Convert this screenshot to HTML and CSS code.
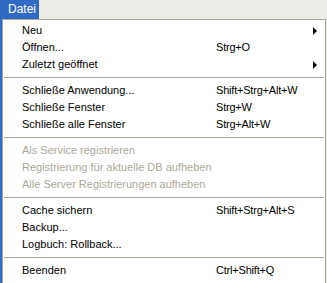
FILE: index.html
```html
<!DOCTYPE html>
<html>
  <head>
    <meta name="viewport" content="width=device-width, initial-scale=1">
    <link rel="stylesheet" href="styles.css">
  </head>
  <body>
    <div class="menubar">
      <span class="menutitle">Datei</span>
    </div>
    <div class="frame">
      <div class="popup">
        <div class="item"><span class="label">Neu</span><span class="key"></span><span class="arrow"></span></div>
        <div class="item"><span class="label">Öffnen...</span><span class="key">Strg+O</span></div>
        <div class="item"><span class="label">Zuletzt geöffnet</span><span class="key"></span><span class="arrow"></span></div>
        <div class="sep"></div>
        <div class="item"><span class="label">Schließe Anwendung...</span><span class="key">Shift+Strg+Alt+W</span></div>
        <div class="item"><span class="label">Schließe Fenster</span><span class="key">Strg+W</span></div>
        <div class="item"><span class="label">Schließe alle Fenster</span><span class="key">Strg+Alt+W</span></div>
        <div class="sep"></div>
        <div class="item disabled"><span class="label">Als Service registrieren</span></div>
        <div class="item disabled"><span class="label">Registrierung für aktuelle DB aufheben</span></div>
        <div class="item disabled"><span class="label">Alle Server Registrierungen aufheben</span></div>
        <div class="sep"></div>
        <div class="item"><span class="label">Cache sichern</span><span class="key">Shift+Strg+Alt+S</span></div>
        <div class="item"><span class="label">Backup...</span></div>
        <div class="item"><span class="label">Logbuch: Rollback...</span></div>
        <div class="sep"></div>
        <div class="item"><span class="label">Beenden</span><span class="key">Ctrl+Shift+Q</span></div>
      </div>
    </div>
  </body>
</html>
```

FILE: styles.css
```css
body {
  margin: 0;
  background-color: #ecebe6;
  font-family: "Liberation Sans", Arial, sans-serif;
  font-size: 11px;
  color: #000000;
}

.menubar {
  display: flex;
  height: 19px;
}

.menutitle {
  background-color: #316ac5;
  color: #ffffff;
  width: 39px;
  line-height: 19px;
  padding-left: 8px;
  box-sizing: border-box;
  font-size: 12px;
}

.frame {
  display: flex;
  border-left: 2px solid #316ac5;
  width: 324px;
}

.popup {
  flex-grow: 1;
  background-color: #ffffff;
  border: 1px solid #aca899;
  padding: 2px 0;
  height: 259px;
}

.item {
  display: grid;
  grid-template-columns: 194px 1fr 12px;
  height: 17px;
  line-height: 17px;
  padding-left: 19px;
  white-space: nowrap;
}

.key {
  letter-spacing: -0.2px;
}

.disabled {
  color: #aca899;
}

.disabled .label {
  grid-column: 1 / 4;
}

.arrow {
  display: flex;
  align-items: center;
}

.arrow::before {
  content: "";
  border-left: 4px solid #000000;
  border-top: 4px solid transparent;
  border-bottom: 4px solid transparent;
}

.sep {
  height: 9px;
  display: flex;
  align-items: center;
  padding: 0 1px;
}

.sep::before {
  content: "";
  flex-grow: 1;
  height: 1px;
  background-color: #aca899;
}
```
